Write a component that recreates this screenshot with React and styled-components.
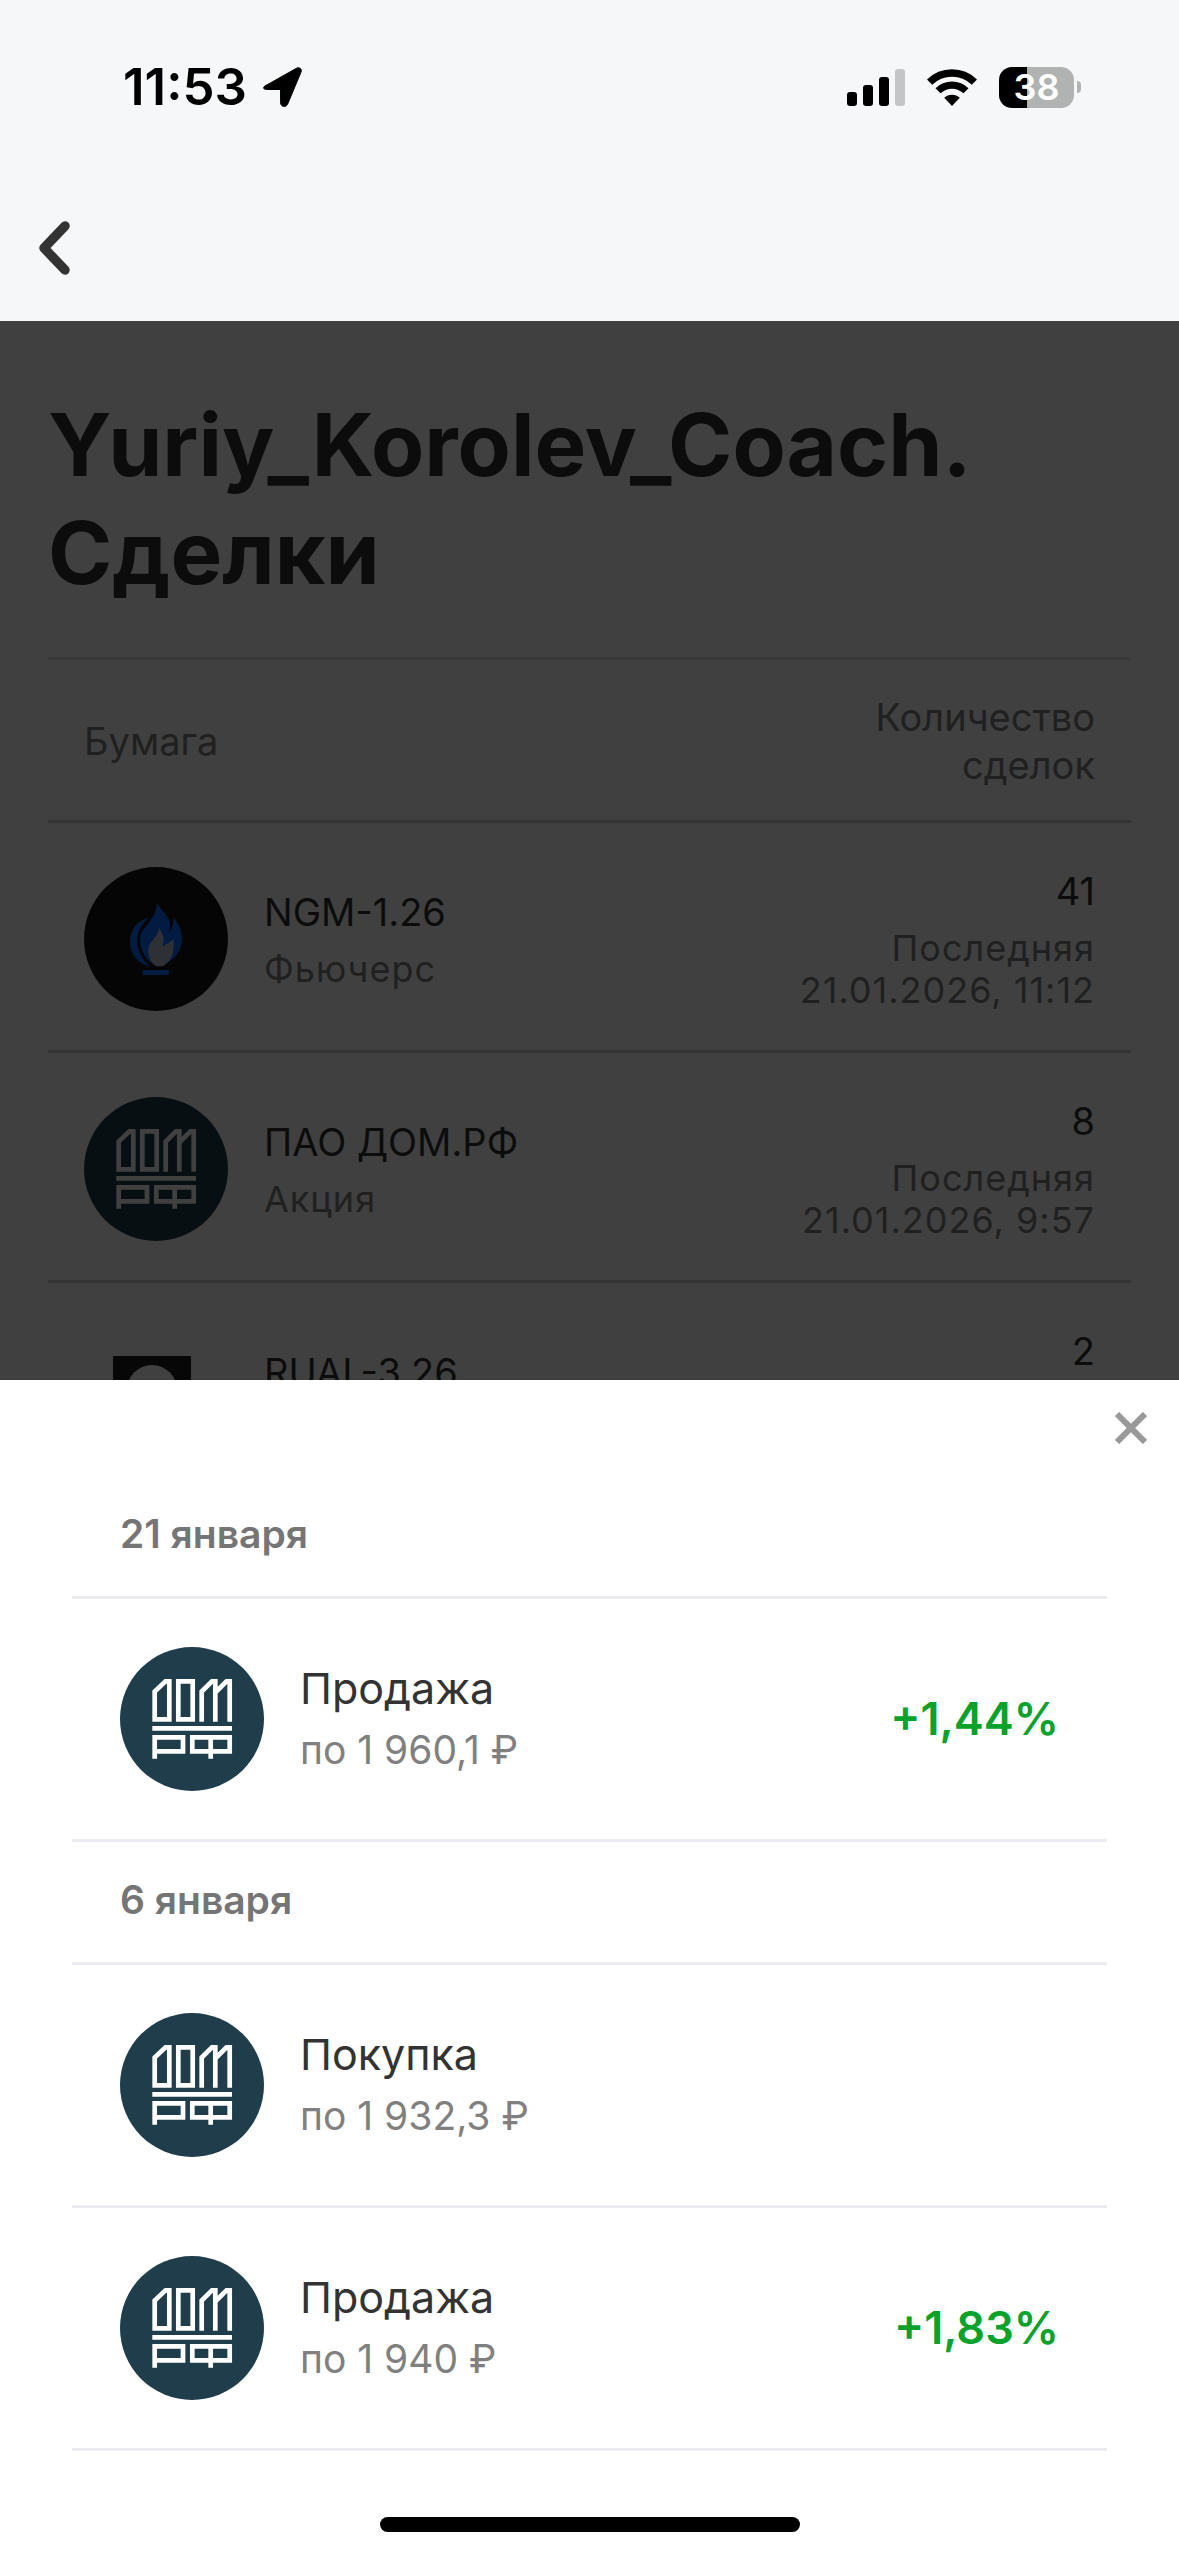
import React from "react";
import styled, { createGlobalStyle } from "styled-components";

const GlobalStyle = createGlobalStyle`
  *, *::before, *::after { box-sizing: border-box; }
  body {
    margin: 0;
    background: #fff;
    font-family: Inter, "Liberation Sans", sans-serif;
    color: #333;
  }
  h1, h2, p, ul { margin: 0; padding: 0; }
  ul { list-style: none; }
  button { border: 0; padding: 0; background: none; cursor: pointer; }
  svg { display: block; }
`;

const Screen = styled.div`
  display: flex;
  flex-direction: column;
  min-height: 100vh;
`;

const TopArea = styled.header`
  background: #f6f7f9;
`;

const StatusBar = styled.div`
  display: flex;
  align-items: center;
  justify-content: space-between;
  height: 174px;
  padding: 0 98px 0 123px;
  color: #000;
`;

const StatusGroup = styled.div`
  display: flex;
  align-items: center;
  gap: ${(p) => p.$gap}px;
`;

const Clock = styled.time`
  font-size: 51px;
  line-height: 60px;
  font-weight: 600;
`;

const Battery = styled.span`
  display: flex;
  align-items: center;
  gap: 3px;
`;

const BatteryBody = styled.span`
  width: 75px;
  height: 41px;
  border-radius: 13px;
  background: linear-gradient(to right, #000 ${(p) => p.$level}%, #b0b3b2 ${(p) => p.$level}%);
  color: #fff;
  font-size: 36px;
  line-height: 41px;
  font-weight: 600;
  text-align: center;
`;

const BatteryTip = styled.span`
  width: 4px;
  height: 12px;
  border-radius: 0 4px 4px 0;
  background: #b0b3b2;
`;

const NavBar = styled.nav`
  display: flex;
  align-items: center;
  height: 147px;
  padding: 0 24px;
`;

const BackButton = styled.button`
  display: grid;
  place-items: center;
  width: 60px;
  height: 96px;
`;

const Stage = styled.main`
  position: relative;
  flex: 1;
  overflow: hidden;
`;

const Page = styled.section`
  padding: 70px 48px 0;
`;

const Title = styled.h1`
  margin-bottom: 50px;
  font-size: 87px;
  line-height: 108px;
  font-weight: 700;
`;

const Table = styled.table`
  width: 100%;
  table-layout: fixed;
  border-spacing: 0;
`;

const HeadCell = styled.th`
  width: ${(p) => p.$width || "auto"};
  padding: 33px 36px 31px;
  border-top: 3px solid #e0e0e0;
  border-bottom: 3px solid #d0d0d0;
  color: #808080;
  font-size: 38px;
  line-height: 48px;
  font-weight: 400;
  text-align: ${(p) => p.$align || "left"};
`;

const Cell = styled.td`
  padding: 44px 36px 39px;
  border-bottom: 3px solid #d0d0d0;
  text-align: ${(p) => p.$align || "left"};
  vertical-align: middle;
`;

const Asset = styled.div`
  display: flex;
  align-items: center;
  gap: 36px;
`;

const Lines = styled.div`
  display: flex;
  flex-direction: column;
  gap: 12px;
`;

const Name = styled.span`
  font-size: 38px;
  line-height: 48px;
`;

const Note = styled.span`
  color: #808080;
  font-size: 36px;
  line-height: 42px;
  letter-spacing: 1px;
`;

const NoWrap = styled.span`
  white-space: nowrap;
`;

const Overlay = styled.div`
  position: absolute;
  inset: 0;
  display: flex;
  flex-direction: column;
  justify-content: flex-end;
  background: rgba(0, 0, 0, 0.75);
`;

const Sheet = styled.section`
  background: #fff;
  padding-bottom: 24px;
`;

const SheetBar = styled.div`
  display: flex;
  justify-content: flex-end;
  height: 96px;
`;

const CloseButton = styled.button`
  display: grid;
  place-items: center;
  width: 96px;
  height: 96px;
`;

const Deals = styled.div`
  padding: 0 72px;
`;

const Day = styled.h2`
  padding: 34px 48px 38px;
  border-bottom: 3px solid #ececf0;
  color: #757575;
  font-size: 39px;
  line-height: 48px;
  font-weight: 600;
`;

const Deal = styled.li`
  display: flex;
  align-items: center;
  gap: 36px;
  padding: 48px;
  border-bottom: 3px solid #ececf0;
`;

const DealText = styled.div`
  display: flex;
  flex: 1;
  flex-direction: column;
  gap: 6px;
`;

const DealType = styled.span`
  font-size: 43px;
  line-height: 56px;
`;

const DealPrice = styled.span`
  color: #808080;
  font-size: 39px;
  line-height: 56px;
`;

const Profit = styled.span`
  color: #07a32b;
  font-size: 45px;
  line-height: 56px;
  font-weight: 600;
`;

const HomeIndicator = styled.div`
  width: 420px;
  height: 15px;
  margin: 66px auto 0;
  border-radius: 8px;
  background: #000;
`;

const LocationIcon = () => (
  <svg width="39" height="40" viewBox="0 0 39 40" aria-hidden="true">
    <path d="M3 18.4 33.6 1.2c2.8-1.5 5.600.8 4.400 3.900L24.600 37.200c-1.500 3.600-7 2.800-7-1.400l-.1-13.300H4.300C-.2 22.500-.7 20.200 3 18.400Z" fill="#000" stroke="#000" strokeWidth="1" strokeLinejoin="round" />
  </svg>
);

const SignalIcon = () => (
  <svg width="58" height="38" viewBox="0 0 58 38" aria-hidden="true">
    <rect x="0" y="24" width="10" height="14" rx="3" />
    <rect x="16" y="17" width="10" height="21" rx="3" />
    <rect x="32" y="9" width="10" height="29" rx="3" />
    <rect x="48" y="1" width="10" height="37" rx="3" fill="#c4c5c7" />
  </svg>
);

const WifiIcon = () => (
  <svg width="50" height="38" viewBox="0 0 50 38" aria-hidden="true">
    <g fill="none" stroke="#000">
      <path d="M2.600 14.100a32 32 0 0 1 44.800 0" strokeWidth="7.400" />
      <path d="M11 22.800a20 20 0 0 1 28 0" strokeWidth="7.200" />
    </g>
    <path d="M17.200 29.800a11.200 11.200 0 0 1 15.600 0L25 38Z" />
  </svg>
);

const BackIcon = () => (
  <svg width="34" height="56" viewBox="0 0 34 56" aria-hidden="true">
    <path d="M28 6 7 28l21 22" fill="none" stroke="#333" strokeWidth="9.500" strokeLinecap="round" strokeLinejoin="round" />
  </svg>
);

const CloseIcon = () => (
  <svg width="32" height="32" viewBox="0 0 32 32" aria-hidden="true">
    <path d="m2 2 28 28M30 2 2 30" fill="none" stroke="#999" strokeWidth="6" />
  </svg>
);

const DomLogo = () => (
  <svg width="144" height="144" viewBox="0 0 144 144" aria-hidden="true">
    <circle cx="72" cy="72" r="72" fill="#1f3d4b" />
    <g fill="none" stroke="#fff" strokeWidth="4.700">
      <path d="M34.700 72.300V44.500L45.500 34.300h3.800v38Z" />
      <path d="M58.300 34.300h14.400v38H58.300Z" />
      <path d="M81.700 74.700V44.500L92 34.300h3.300v40.400M95.300 45.500 106.500 34.300h3.200v40.400" />
      <path d="M32.300 81.300H112" />
      <path d="M34.700 111.700V90.300H63v14H34.700" />
      <path d="M72.300 90.300h37.400v14H72.300ZM90.700 90.300v21.400" />
    </g>
  </svg>
);

const GasLogo = () => (
  <svg width="144" height="144" viewBox="24 24 432 432" aria-hidden="true">
    <circle cx="240" cy="240" r="216" fill="#141414" />
    <g fill="#0a6cff">
      <path d="M243 131c8 20 34 36 39 60 2 12-2 22-2 30 10-12 10-30 15-46 6 16 22 30 23 60 1 42-24 76-73 87-37-14-55-50-53-84C194 205 240 185 243 131Z" />
      <path d="M220 176C180 184 162 214 162 248c0 42 28 68 60 74-26-22-40-52-38-82 2-28 16-50 36-64Z" />
      <path d="M200 333h79v15h-79Z" />
    </g>
    <path d="M250 205c4 14 14 24 13 38 0 8-3 14-2 20 10-10 22-12 32-22 2 44-6 64-32 81h-20c-16-10-24-26-24-48 0-30 32-40 33-69Z" fill="#b4bfd4" />
  </svg>
);

const RualLogo = () => (
  <svg width="144" height="144" viewBox="0 0 144 144" aria-hidden="true">
    <circle cx="72" cy="72" r="72" fill="#fff" />
    <path d="M29 29h78v86H29Z" fill="#1c1c1c" />
    <circle cx="68" cy="63" r="25" fill="#fff" />
  </svg>
);

const papers = [
  { logo: GasLogo, name: "NGM-1.26", kind: "Фьючерс", count: 41, date: "21.01.2026, 11:12" },
  { logo: DomLogo, name: "ПАО ДОМ.РФ", kind: "Акция", count: 8, date: "21.01.2026, 9:57" },
  { logo: RualLogo, name: "RUAL-3.26", kind: "Фьючерс", count: 2, date: "20.01.2026, 18:40" },
];

const days = [
  { day: "21 января", deals: [{ type: "Продажа", price: "по 1 960,1 ₽", profit: "+1,44%" }] },
  {
    day: "6 января",
    deals: [
      { type: "Покупка", price: "по 1 932,3 ₽" },
      { type: "Продажа", price: "по 1 940 ₽", profit: "+1,83%" },
    ],
  },
];

export default function App() {
  return (
    <>
      <GlobalStyle />
      <Screen>
        <TopArea>
          <StatusBar>
            <StatusGroup $gap={16}>
              <Clock>11:53</Clock>
              <LocationIcon />
            </StatusGroup>
            <StatusGroup $gap={22}>
              <SignalIcon />
              <WifiIcon />
              <Battery>
                <BatteryBody $level={38}>38</BatteryBody>
                <BatteryTip />
              </Battery>
            </StatusGroup>
          </StatusBar>
          <NavBar>
            <BackButton type="button" aria-label="Назад">
              <BackIcon />
            </BackButton>
          </NavBar>
        </TopArea>

        <Stage>
          <Page>
            <Title>Yuriy_Korolev_Coach. Сделки</Title>
            <Table>
              <thead>
                <tr>
                  <HeadCell scope="col">Бумага</HeadCell>
                  <HeadCell scope="col" $width="384px" $align="right">
                    Количество сделок
                  </HeadCell>
                </tr>
              </thead>
              <tbody>
                {papers.map(({ logo: Logo, name, kind, count, date }) => (
                  <tr key={name}>
                    <Cell>
                      <Asset>
                        <Logo />
                        <Lines>
                          <Name>{name}</Name>
                          <Note>{kind}</Note>
                        </Lines>
                      </Asset>
                    </Cell>
                    <Cell $align="right">
                      <Lines>
                        <Name>{count}</Name>
                        <Note>
                          Последняя <NoWrap>{date}</NoWrap>
                        </Note>
                      </Lines>
                    </Cell>
                  </tr>
                ))}
              </tbody>
            </Table>
          </Page>

          <Overlay>
            <Sheet role="dialog" aria-label="Сделки по бумаге">
              <SheetBar>
                <CloseButton type="button" aria-label="Закрыть">
                  <CloseIcon />
                </CloseButton>
              </SheetBar>
              <Deals>
                {days.map(({ day, deals }) => (
                  <section key={day}>
                    <Day>{day}</Day>
                    <ul>
                      {deals.map(({ type, price, profit }) => (
                        <Deal key={type}>
                          <DomLogo />
                          <DealText>
                            <DealType>{type}</DealType>
                            <DealPrice>{price}</DealPrice>
                          </DealText>
                          {profit && <Profit>{profit}</Profit>}
                        </Deal>
                      ))}
                    </ul>
                  </section>
                ))}
              </Deals>
              <HomeIndicator />
            </Sheet>
          </Overlay>
        </Stage>
      </Screen>
    </>
  );
}
